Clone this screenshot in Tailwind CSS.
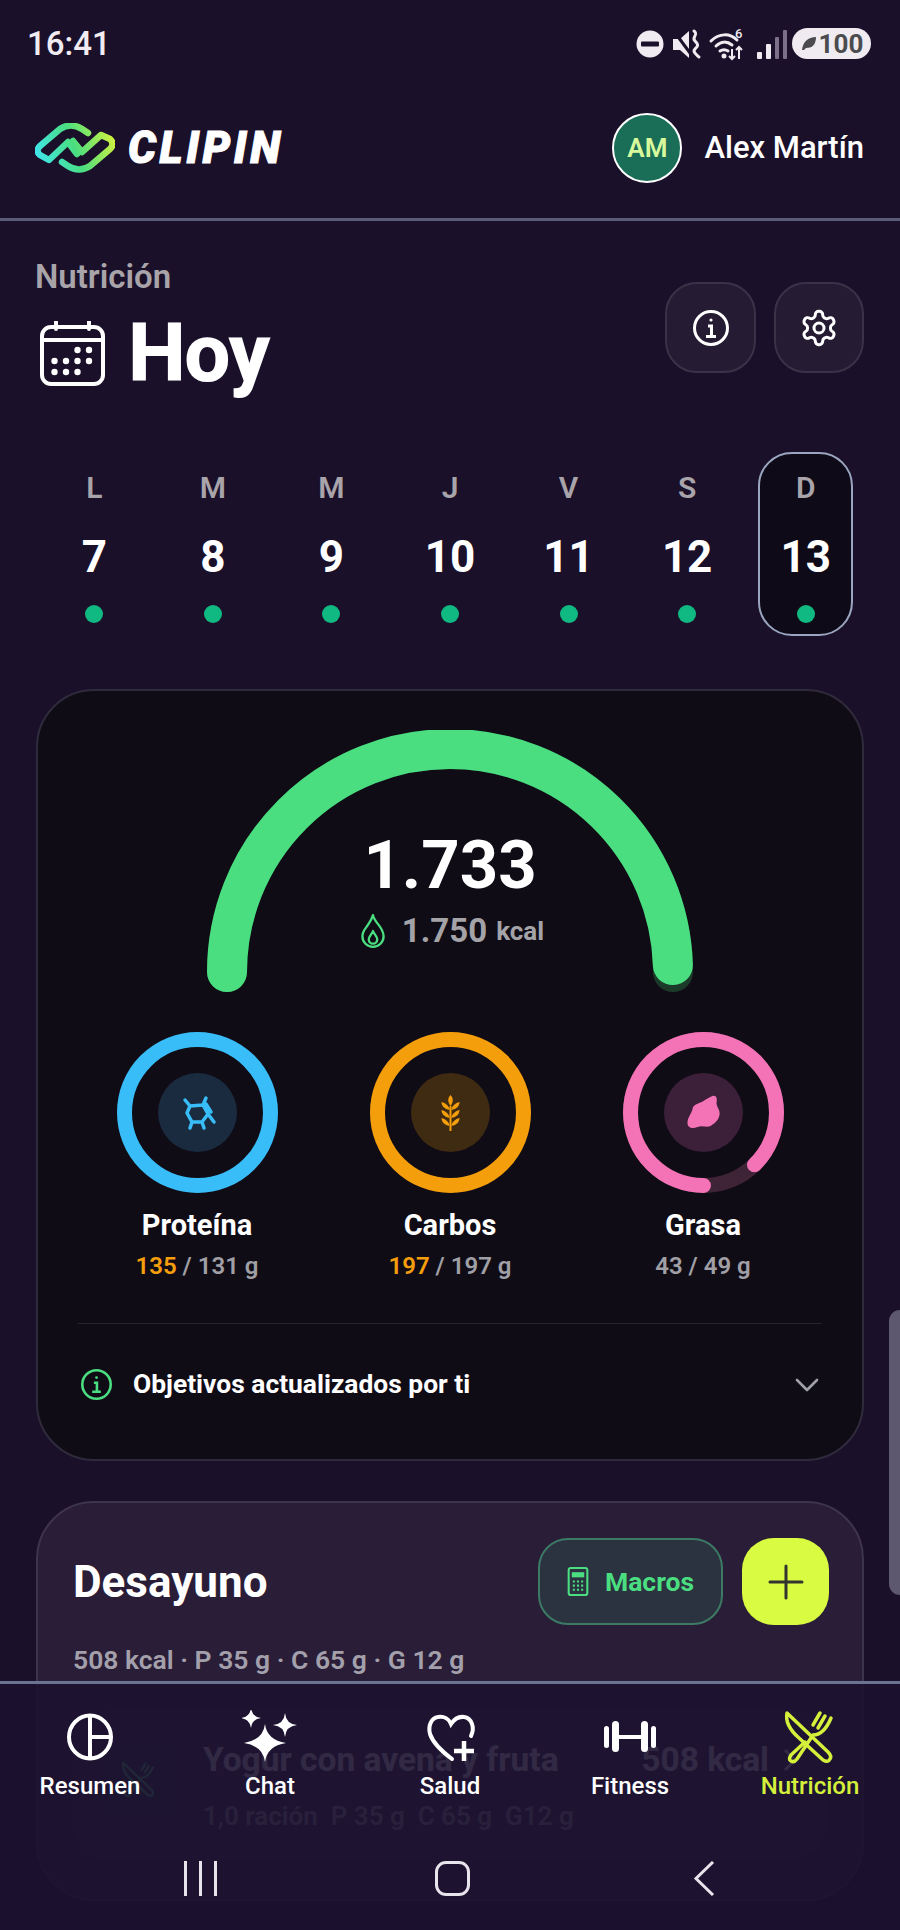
<!DOCTYPE html>
<html lang="es">
<head>
  <meta charset="UTF-8">
  <title>Clipin | Nutrición</title>
  <script src="https://cdn.jsdelivr.net/npm/@tailwindcss/browser@4"></script>
</head>
<body class="bg-[#1b1029]">
<div class="relative w-[900px] h-[1930px] overflow-hidden bg-[#1b1029] font-['Roboto',sans-serif] text-white">

  <!-- status bar -->
  <div class="h-[87px] flex items-center justify-between pl-[27px] pr-[29px]">
    <span class="text-[33px] font-medium text-[#f0ecf2]">16:41</span>
    <div class="flex items-center">
      <svg width="156" height="34" viewBox="0 0 156 34">
        <circle cx="14" cy="17" r="13.5" fill="#efebf0"/>
        <rect x="5" y="14.5" width="18" height="5" rx="1" fill="#1b1029"/>
        <path d="M37 12h7l9-8v27l-9-8h-7z" fill="#efebf0"/>
        <path d="M37 3l20 27" stroke="#1b1029" stroke-width="3"/>
        <path d="M58 4c5 4-3 6 1 10s3 5 0 8 2 6 4 8" stroke="#efebf0" stroke-width="3" fill="none" stroke-linecap="round"/>
        <path d="M75 14c8-8 19-8 26-1M80 19c5-5 11-5 16-1M84 24c3-2 5-2 8 0" stroke="#efebf0" stroke-width="3" fill="none" stroke-linecap="round"/>
        <circle cx="88" cy="29" r="2.5" fill="#efebf0"/>
        <text x="99" y="11" font-size="13" font-weight="500" fill="#efebf0">6</text>
        <path d="M96 22v10M93 29l3 3 3-3M103 32V20M100 23l3-3 3 3" stroke="#efebf0" stroke-width="2" fill="none"/>
        <rect x="121" y="25" width="5" height="7" rx="1" fill="#efebf0"/>
        <rect x="130" y="17" width="5" height="15" rx="1" fill="#efebf0"/>
        <rect x="139" y="10" width="4" height="22" rx="1" fill="#7c6f88"/>
        <rect x="147" y="3" width="4" height="29" rx="1" fill="#7c6f88"/>
      </svg>
      <div class="w-[79px] h-[31px] rounded-full bg-[#efebf0] flex items-center justify-center gap-[2px]">
        <svg width="17" height="15" viewBox="0 0 17 15"><path d="M2 14C3 6 8 1 16 1c0 8-4 11-10 11L4 14z" fill="#4b4b4f"/></svg>
        <span class="text-[26px] leading-none font-bold text-[#4b4b4f]">100</span>
      </div>
    </div>
  </div>

  <!-- header -->
  <header class="h-[134px] flex items-center justify-between pl-[35px] pr-[36px] pb-[9px] border-b-[3px] border-[#5b5d78]">
    <div class="flex items-center gap-[13px]">
      <svg width="80" height="50" viewBox="0 0 80 50" fill="none">
        <defs>
          <linearGradient id="logoGrad" x1="0" y1="40" x2="80" y2="10" gradientUnits="userSpaceOnUse">
            <stop offset="0" stop-color="#3fe6f5"/>
            <stop offset="0.5" stop-color="#4ade80"/>
            <stop offset="1" stop-color="#d8f23c"/>
          </linearGradient>
        </defs>
        <path d="M53 10L47 6Q36 -1 25 6L5 23Q0 28 5 32L14 37L33 19L42 31" stroke="url(#logoGrad)" stroke-width="6.5" stroke-linejoin="round" stroke-linecap="round"/>
        <path d="M27 39L33 43Q44 50 55 43L75 26Q80 21 75 16L66 12L47 29L38 18" stroke="url(#logoGrad)" stroke-width="6.5" stroke-linejoin="round" stroke-linecap="round"/>
      </svg>
      <span class="text-[44px] leading-none font-black italic tracking-[3.5px] [-webkit-text-stroke:1px_white]">CLIPIN</span>
    </div>
    <div class="flex items-center gap-[22px]">
      <div class="w-[70px] h-[70px] rounded-full border-2 border-white bg-[#1a6e58] flex items-center justify-center text-[26px] font-semibold text-[#d9f99d]">AM</div>
      <span class="text-[31px] font-medium">Alex Martín</span>
    </div>
  </header>

  <!-- title -->
  <div class="flex justify-between pl-[35px] pr-[36px] pt-[38px]">
    <div>
      <p class="text-[33px] leading-[36px] font-semibold text-[#a8a4aa]">Nutrición</p>
      <div class="flex items-center gap-[23px] mt-[18px] pl-[5px]">
        <svg width="65" height="65" viewBox="0 0 65 65" fill="none">
          <rect x="2" y="6" width="61" height="57" rx="9" stroke="white" stroke-width="4"/>
          <path d="M2 19h61" stroke="white" stroke-width="4"/>
          <path d="M16 1v7M49 1v7" stroke="white" stroke-width="4" stroke-linecap="round"/>
          <g fill="white">
            <circle cx="37.5" cy="29" r="3.2"/><circle cx="49" cy="29" r="3.2"/>
            <circle cx="14.5" cy="40" r="3.2"/><circle cx="26" cy="40" r="3.2"/><circle cx="37.5" cy="40" r="3.2"/><circle cx="49" cy="40" r="3.2"/>
            <circle cx="14.5" cy="51" r="3.2"/><circle cx="26" cy="51" r="3.2"/><circle cx="37.5" cy="51" r="3.2"/>
          </g>
        </svg>
        <span class="text-[82px] leading-[80px] font-extrabold tracking-[-1.5px]">Hoy</span>
      </div>
    </div>
    <div class="flex gap-[18px] pt-[23px]">
      <button class="w-[91px] h-[91px] rounded-[32px] bg-[#251b33] border-2 border-[#3a3348] flex items-center justify-center">
        <svg width="36" height="36" viewBox="0 0 36 36" fill="none" stroke="white" stroke-width="3">
          <circle cx="18" cy="18" r="16.5"/>
          <path d="M15 16h3.5v10M13 26.5h10"/>
          <circle cx="18" cy="10" r="1.6" fill="white" stroke="none"/>
        </svg>
      </button>
      <button class="w-[90px] h-[91px] rounded-[32px] bg-[#251b33] border-2 border-[#3a3348] flex items-center justify-center">
        <svg width="40" height="40" viewBox="0 0 24 24" fill="none" stroke="white" stroke-width="1.8" stroke-linejoin="round">
          <path d="M12.22 2h-.44a2 2 0 0 0-2 2v.18a2 2 0 0 1-1 1.73l-.43.25a2 2 0 0 1-2 0l-.15-.08a2 2 0 0 0-2.73.73l-.22.38a2 2 0 0 0 .73 2.73l.15.1a2 2 0 0 1 1 1.72v.51a2 2 0 0 1-1 1.74l-.15.09a2 2 0 0 0-.73 2.73l.22.38a2 2 0 0 0 2.73.73l.15-.08a2 2 0 0 1 2 0l.43.25a2 2 0 0 1 1 1.73V20a2 2 0 0 0 2 2h.44a2 2 0 0 0 2-2v-.18a2 2 0 0 1 1-1.73l.43-.25a2 2 0 0 1 2 0l.15.08a2 2 0 0 0 2.73-.73l.22-.39a2 2 0 0 0-.73-2.73l-.15-.08a2 2 0 0 1-1-1.74v-.5a2 2 0 0 1 1-1.74l.15-.09a2 2 0 0 0 .73-2.73l-.22-.38a2 2 0 0 0-2.73-.73l-.15.08a2 2 0 0 1-2 0l-.43-.25a2 2 0 0 1-1-1.73V4a2 2 0 0 0-2-2z"/>
          <circle cx="12" cy="12" r="3"/>
        </svg>
      </button>
    </div>
  </div>

  <!-- week -->
  <div class="grid grid-cols-7 px-[35px] mt-[59px]">
    <div class="h-[184px] mx-[12px] border-2 border-transparent flex flex-col items-center pt-[18px]">
      <span class="text-[30px] leading-[32px] font-semibold text-[#a8a4aa]">L</span>
      <span class="text-[44px] leading-[48px] font-bold mt-[29px]">7</span>
      <span class="w-[18px] h-[18px] rounded-full bg-[#10b981] mt-[24px]"></span>
    </div>
    <div class="h-[184px] mx-[12px] border-2 border-transparent flex flex-col items-center pt-[18px]">
      <span class="text-[30px] leading-[32px] font-semibold text-[#a8a4aa]">M</span>
      <span class="text-[44px] leading-[48px] font-bold mt-[29px]">8</span>
      <span class="w-[18px] h-[18px] rounded-full bg-[#10b981] mt-[24px]"></span>
    </div>
    <div class="h-[184px] mx-[12px] border-2 border-transparent flex flex-col items-center pt-[18px]">
      <span class="text-[30px] leading-[32px] font-semibold text-[#a8a4aa]">M</span>
      <span class="text-[44px] leading-[48px] font-bold mt-[29px]">9</span>
      <span class="w-[18px] h-[18px] rounded-full bg-[#10b981] mt-[24px]"></span>
    </div>
    <div class="h-[184px] mx-[12px] border-2 border-transparent flex flex-col items-center pt-[18px]">
      <span class="text-[30px] leading-[32px] font-semibold text-[#a8a4aa]">J</span>
      <span class="text-[44px] leading-[48px] font-bold mt-[29px]">10</span>
      <span class="w-[18px] h-[18px] rounded-full bg-[#10b981] mt-[24px]"></span>
    </div>
    <div class="h-[184px] mx-[12px] border-2 border-transparent flex flex-col items-center pt-[18px]">
      <span class="text-[30px] leading-[32px] font-semibold text-[#a8a4aa]">V</span>
      <span class="text-[44px] leading-[48px] font-bold mt-[29px]">11</span>
      <span class="w-[18px] h-[18px] rounded-full bg-[#10b981] mt-[24px]"></span>
    </div>
    <div class="h-[184px] mx-[12px] border-2 border-transparent flex flex-col items-center pt-[18px]">
      <span class="text-[30px] leading-[32px] font-semibold text-[#a8a4aa]">S</span>
      <span class="text-[44px] leading-[48px] font-bold mt-[29px]">12</span>
      <span class="w-[18px] h-[18px] rounded-full bg-[#10b981] mt-[24px]"></span>
    </div>
    <div class="h-[184px] mx-[12px] rounded-[34px] border-2 border-[#9aa5c0] bg-[#0f0a18] flex flex-col items-center pt-[18px]">
      <span class="text-[30px] leading-[32px] font-semibold text-[#a8a4aa]">D</span>
      <span class="text-[44px] leading-[48px] font-bold mt-[29px]">13</span>
      <span class="w-[18px] h-[18px] rounded-full bg-[#10b981] mt-[24px]"></span>
    </div>
  </div>

  <!-- calories card -->
  <section class="mx-[36px] mt-[53px] h-[772px] rounded-[58px] bg-[#100c16] border-2 border-[#2f2b3c]">
    <div class="relative w-[486px] h-[262px] mx-auto mt-[39px]">
      <svg width="486" height="262" viewBox="0 0 486 262" fill="none">
        <path d="M20 242A223 223 0 0 1 466 242" stroke="#1b3a2a" stroke-width="40" stroke-linecap="round"/>
        <path d="M20 242A223 223 0 0 1 466 242" stroke="#4ade80" stroke-width="40" stroke-linecap="round" pathLength="100" stroke-dasharray="99 100"/>
      </svg>
      <div class="absolute left-0 right-0 top-[97px] flex flex-col items-center">
        <span class="text-[67px] leading-[76px] font-bold">1.733</span>
        <div class="flex items-center mt-[8px] pl-[4px]">
          <svg width="26" height="36" viewBox="0 0 24 34" fill="none" stroke="#4ade80" stroke-width="2.2" stroke-linejoin="round">
            <path d="M12 2c1 7 10 11 10 20a10 10 0 0 1-20 0c0-6 4-8 6-12 2-3 3-5 4-8z"/>
            <path d="M12 17c1 3 4 5 4 8a4 4 0 0 1-8 0c0-3 3-5 4-8z"/>
          </svg>
          <span class="text-[33px] leading-[40px] font-bold text-[#a3a3a8] ml-[16px]">1.750</span>
          <span class="text-[26px] leading-[40px] font-bold text-[#a3a3a8] ml-[9px]">kcal</span>
        </div>
      </div>
    </div>

    <div class="grid grid-cols-3 w-[759px] mx-auto mt-[40px]">
      <div class="flex flex-col items-center">
        <div class="relative w-[161px] h-[161px]">
          <svg width="161" height="161" viewBox="0 0 161 161" fill="none">
            <circle cx="80.5" cy="80.5" r="73" stroke="#38bdf8" stroke-width="15"/>
            <circle cx="80.5" cy="80.5" r="39.5" fill="#1a2b40"/>
            <g stroke="#38bdf8" stroke-width="3.5" stroke-linecap="round" stroke-linejoin="round" transform="translate(64 65)">
              <path d="M9 9L22 8L27 17L21 25L11 25L6 16ZM9 9L4 3M22 8L25 1M27 17L33 25M21 25L23 31M11 25L9 31M25 7L30 15"/>
            </g>
          </svg>
        </div>
        <span class="text-[29px] leading-[34px] font-bold mt-[15px]">Proteína</span>
        <span class="text-[24px] leading-[30px] font-semibold text-[#9f9fa5] mt-[9px]"><span class="text-[#f59e0b]">135</span> / 131 g</span>
      </div>
      <div class="flex flex-col items-center">
        <div class="relative w-[161px] h-[161px]">
          <svg width="161" height="161" viewBox="0 0 161 161" fill="none">
            <circle cx="80.5" cy="80.5" r="73" stroke="#f59e0b" stroke-width="15"/>
            <circle cx="80.5" cy="80.5" r="39.5" fill="#3f2a12"/>
            <g fill="#f59e0b" transform="translate(70.5 63)">
              <path d="M10 0C13 3 13 7 10 11C7 7 7 3 10 0Z"/>
              <path d="M9 15C4 14 1 11 1 7C5 8 9 11 9 15Z"/><path d="M11 15C16 14 19 11 19 7C15 8 11 11 11 15Z"/>
              <path d="M9 23C4 22 1 19 1 15C5 16 9 19 9 23Z"/><path d="M11 23C16 22 19 19 19 15C15 16 11 19 11 23Z"/>
              <path d="M9 31C4 30 1 27 1 23C5 24 9 27 9 31Z"/><path d="M11 31C16 30 19 27 19 23C15 24 11 27 11 31Z"/>
              <rect x="9" y="11" width="2" height="25" />
            </g>
          </svg>
        </div>
        <span class="text-[29px] leading-[34px] font-bold mt-[15px]">Carbos</span>
        <span class="text-[24px] leading-[30px] font-semibold text-[#9f9fa5] mt-[9px]"><span class="text-[#f59e0b]">197</span> / 197 g</span>
      </div>
      <div class="flex flex-col items-center">
        <div class="relative w-[161px] h-[161px]">
          <svg width="161" height="161" viewBox="0 0 161 161" fill="none">
            <circle cx="80.5" cy="80.5" r="73" stroke="#3f2438" stroke-width="15"/>
            <circle cx="80.5" cy="80.5" r="73" stroke="#f472b6" stroke-width="15" stroke-linecap="round" pathLength="100" stroke-dasharray="87.7 100" transform="rotate(90 80.5 80.5)"/>
            <circle cx="80.5" cy="80.5" r="39.5" fill="#3c1f38"/>
            <path transform="translate(63.5 63)" d="M26 1C30 0 31 4 30 8C30 12 34 15 33 20C32 26 27 29 24 31C20 33 16 30 11 32C6 34 1 33 1 28C1 22 5 19 6 14C7 9 12 9 17 6C20 4 23 2 26 1Z" fill="#f472b6"/>
          </svg>
        </div>
        <span class="text-[29px] leading-[34px] font-bold mt-[15px]">Grasa</span>
        <span class="text-[24px] leading-[30px] font-semibold text-[#9f9fa5] mt-[9px]">43 / 49 g</span>
      </div>
    </div>

    <div class="mx-[40px] mt-[42px] border-t border-[#26262e] h-[122px] flex items-center justify-between pl-[3px] pr-[3px]">
      <div class="flex items-center gap-[21px]">
        <svg width="31" height="31" viewBox="0 0 36 36" fill="none" stroke="#4ade80" stroke-width="3">
          <circle cx="18" cy="18" r="16.5"/>
          <path d="M15 16h3.5v10M13 26.5h10"/>
          <circle cx="18" cy="10" r="1.6" fill="#4ade80" stroke="none"/>
        </svg>
        <span class="text-[26.4px] font-bold">Objetivos actualizados por ti</span>
      </div>
      <svg width="24" height="14" viewBox="0 0 24 14" fill="none" stroke="#a0a0a8" stroke-width="2.6" stroke-linecap="round" stroke-linejoin="round"><path d="M2 2l10 10L22 2"/></svg>
    </div>
  </section>

  <!-- meal card -->
  <section class="mx-[36px] mt-[40px] h-[400px] rounded-[58px] bg-[#2a1d38] border-2 border-[#3d3450] pt-[35px] pl-[35px] pr-[33px]">
    <div class="flex items-center justify-between">
      <h2 class="text-[44px] leading-[50px] font-bold">Desayuno</h2>
      <div class="flex gap-[19px]">
        <button class="w-[185px] h-[87px] rounded-[30px] bg-[#2b3240] border-2 border-[#3c7a64] flex items-center justify-center gap-[16px]">
          <svg width="22" height="29" viewBox="0 0 20 28" fill="none" stroke="#4ade80" stroke-width="2"><rect x="1" y="1" width="18" height="26" rx="2"/><rect x="4" y="5" width="12" height="5" fill="#4ade80" stroke="none"/><path d="M5 14h2M9 14h2M13 14h2M5 18h2M9 18h2M13 18h2M5 22h2M9 22h2M13 22h2" stroke-width="2"/></svg>
          <span class="text-[26.5px] font-bold text-[#4ade80]">Macros</span>
        </button>
        <button class="w-[87px] h-[87px] rounded-[32px] bg-[#d9fb41] flex items-center justify-center">
          <svg width="36" height="36" viewBox="0 0 36 36" stroke="#33332f" stroke-width="3" stroke-linecap="round"><path d="M18 2v32M2 18h32"/></svg>
        </button>
      </div>
    </div>
    <p class="text-[26.5px] leading-[32px] font-semibold text-[#a3a0ab] mt-[19px]">508 kcal · P 35 g · C 65 g · G 12 g</p>
    <div class="mt-[34px] mr-[2px] h-[150px] rounded-[36px] bg-[#33284a] pl-[26px] pr-[30px] pt-[30px] flex gap-[24px]">
      <div class="w-[80px] h-[80px] rounded-[20px] bg-[#23303a] flex items-center justify-center shrink-0">
        <svg width="38" height="40" viewBox="0 0 56 56" fill="none" stroke="#4ade80" stroke-width="3.5"><path d="M5 3C3 13 9 21 17 28L41 50Q46 53 48 49Q50 46 46 42Z"/><path d="M23 32L9 45Q6 50 9 51Q12 53 15 49L31 25C38 25 44 20 49 8M38 3L31 15M43 6L36 18"/></svg>
      </div>
      <div class="flex-1">
        <div class="flex items-center justify-between">
          <span class="text-[33.5px] leading-[40px] font-bold">Yogur con avena y fruta</span>
          <span class="text-[33.5px] leading-[40px] font-bold flex items-center gap-[14px]">508 kcal
            <svg width="14" height="24" viewBox="0 0 14 24" fill="none" stroke="white" stroke-width="3"><path d="M2 2l10 10L2 22"/></svg>
          </span>
        </div>
        <p class="text-[26px] leading-[32px] font-semibold text-[#a3a0ab] mt-[20px]">1,0 ración&nbsp; P 35 g&nbsp; C 65 g&nbsp; G12 g</p>
      </div>
    </div>
  </section>

  <!-- scrollbar -->
  <div class="absolute right-0 top-[1310px] w-[11px] h-[285px] rounded-l-full bg-[#5d5870]"></div>

  <!-- bottom nav -->
  <nav class="absolute left-0 right-0 top-[1681px] bottom-0 border-t-[3px] border-[#6a7390] bg-[#1c1230]/90">
    <div class="grid grid-cols-5 pt-[26px]">
      <div class="flex flex-col items-center">
        <svg width="56" height="56" viewBox="0 0 56 56" fill="none" stroke="white" stroke-width="4">
          <ellipse cx="28" cy="27" rx="21" ry="21.5"/><path d="M28 5v44M28 27h21"/>
        </svg>
        <span class="text-[24px] leading-[30px] font-medium mt-[5px]">Resumen</span>
      </div>
      <div class="flex flex-col items-center">
        <svg width="56" height="56" viewBox="0 0 56 56" fill="white">
          <path d="M23 14Q25 30 44 33Q25 36 23 52Q21 36 2 33Q21 30 23 14Z"/>
          <path d="M9 -2Q10 7 19 8Q10 9 9 18Q8 9 -1 8Q8 7 9 -2Z"/>
          <path d="M43 3Q44 14 55 15Q44 16 43 27Q42 16 31 15Q42 14 43 3Z"/>
        </svg>
        <span class="text-[24px] leading-[30px] font-medium mt-[5px]">Chat</span>
      </div>
      <div class="flex flex-col items-center">
        <svg width="56" height="56" viewBox="0 0 56 56" fill="none" stroke="white" stroke-width="4" stroke-linecap="round">
          <path d="M49 26C53 18 50 8 42 7C35 6 31 11 29 14C27 9 22 6 16 7C9 8 6 16 8 24C11 33 22 43 30 49"/>
          <path d="M32 41h20M42 31v20" stroke-width="4.5" stroke-linecap="butt"/>
        </svg>
        <span class="text-[24px] leading-[30px] font-medium mt-[5px]">Salud</span>
      </div>
      <div class="flex flex-col items-center">
        <svg width="56" height="56" viewBox="0 0 56 56" fill="white">
          <rect x="2" y="16" width="5" height="22" rx="2.5"/><rect x="10" y="11" width="7" height="31" rx="3.5"/>
          <rect x="17" y="25" width="22" height="4"/>
          <rect x="39" y="11" width="7" height="31" rx="3.5"/><rect x="49" y="16" width="5" height="22" rx="2.5"/>
        </svg>
        <span class="text-[24px] leading-[30px] font-medium mt-[5px]">Fitness</span>
      </div>
      <div class="flex flex-col items-center">
        <svg width="56" height="56" viewBox="0 0 56 56" fill="none" stroke="#d4f03a" stroke-width="3.5" stroke-linejoin="round" stroke-linecap="round">
          <path d="M5 3C3 13 9 21 17 28L41 50Q46 53 48 49Q50 46 46 42Z"/>
          <path d="M23 32L9 45Q6 50 9 51Q12 53 15 49L31 25C38 25 44 20 49 8M38 3L31 15M43 6L36 18"/>
        </svg>
        <span class="text-[24px] leading-[30px] font-medium text-[#d4f03a] mt-[5px]">Nutrición</span>
      </div>
    </div>
    <div class="grid grid-cols-3 w-[756px] ml-[74px] mt-[60px]">
      <div class="flex justify-center gap-[12px]">
        <span class="w-[3px] h-[35px] bg-[#e8e4ec]"></span>
        <span class="w-[3px] h-[35px] bg-[#e8e4ec]"></span>
        <span class="w-[3px] h-[35px] bg-[#e8e4ec]"></span>
      </div>
      <div class="flex justify-center">
        <span class="w-[35px] h-[35px] rounded-[11px] border-[3px] border-[#e8e4ec]"></span>
      </div>
      <div class="flex justify-center">
        <svg width="22" height="35" viewBox="0 0 22 35" fill="none" stroke="#e8e4ec" stroke-width="3"><path d="M20 1L3 17.5L20 34"/></svg>
      </div>
    </div>
  </nav>
</div>
</body>
</html>
